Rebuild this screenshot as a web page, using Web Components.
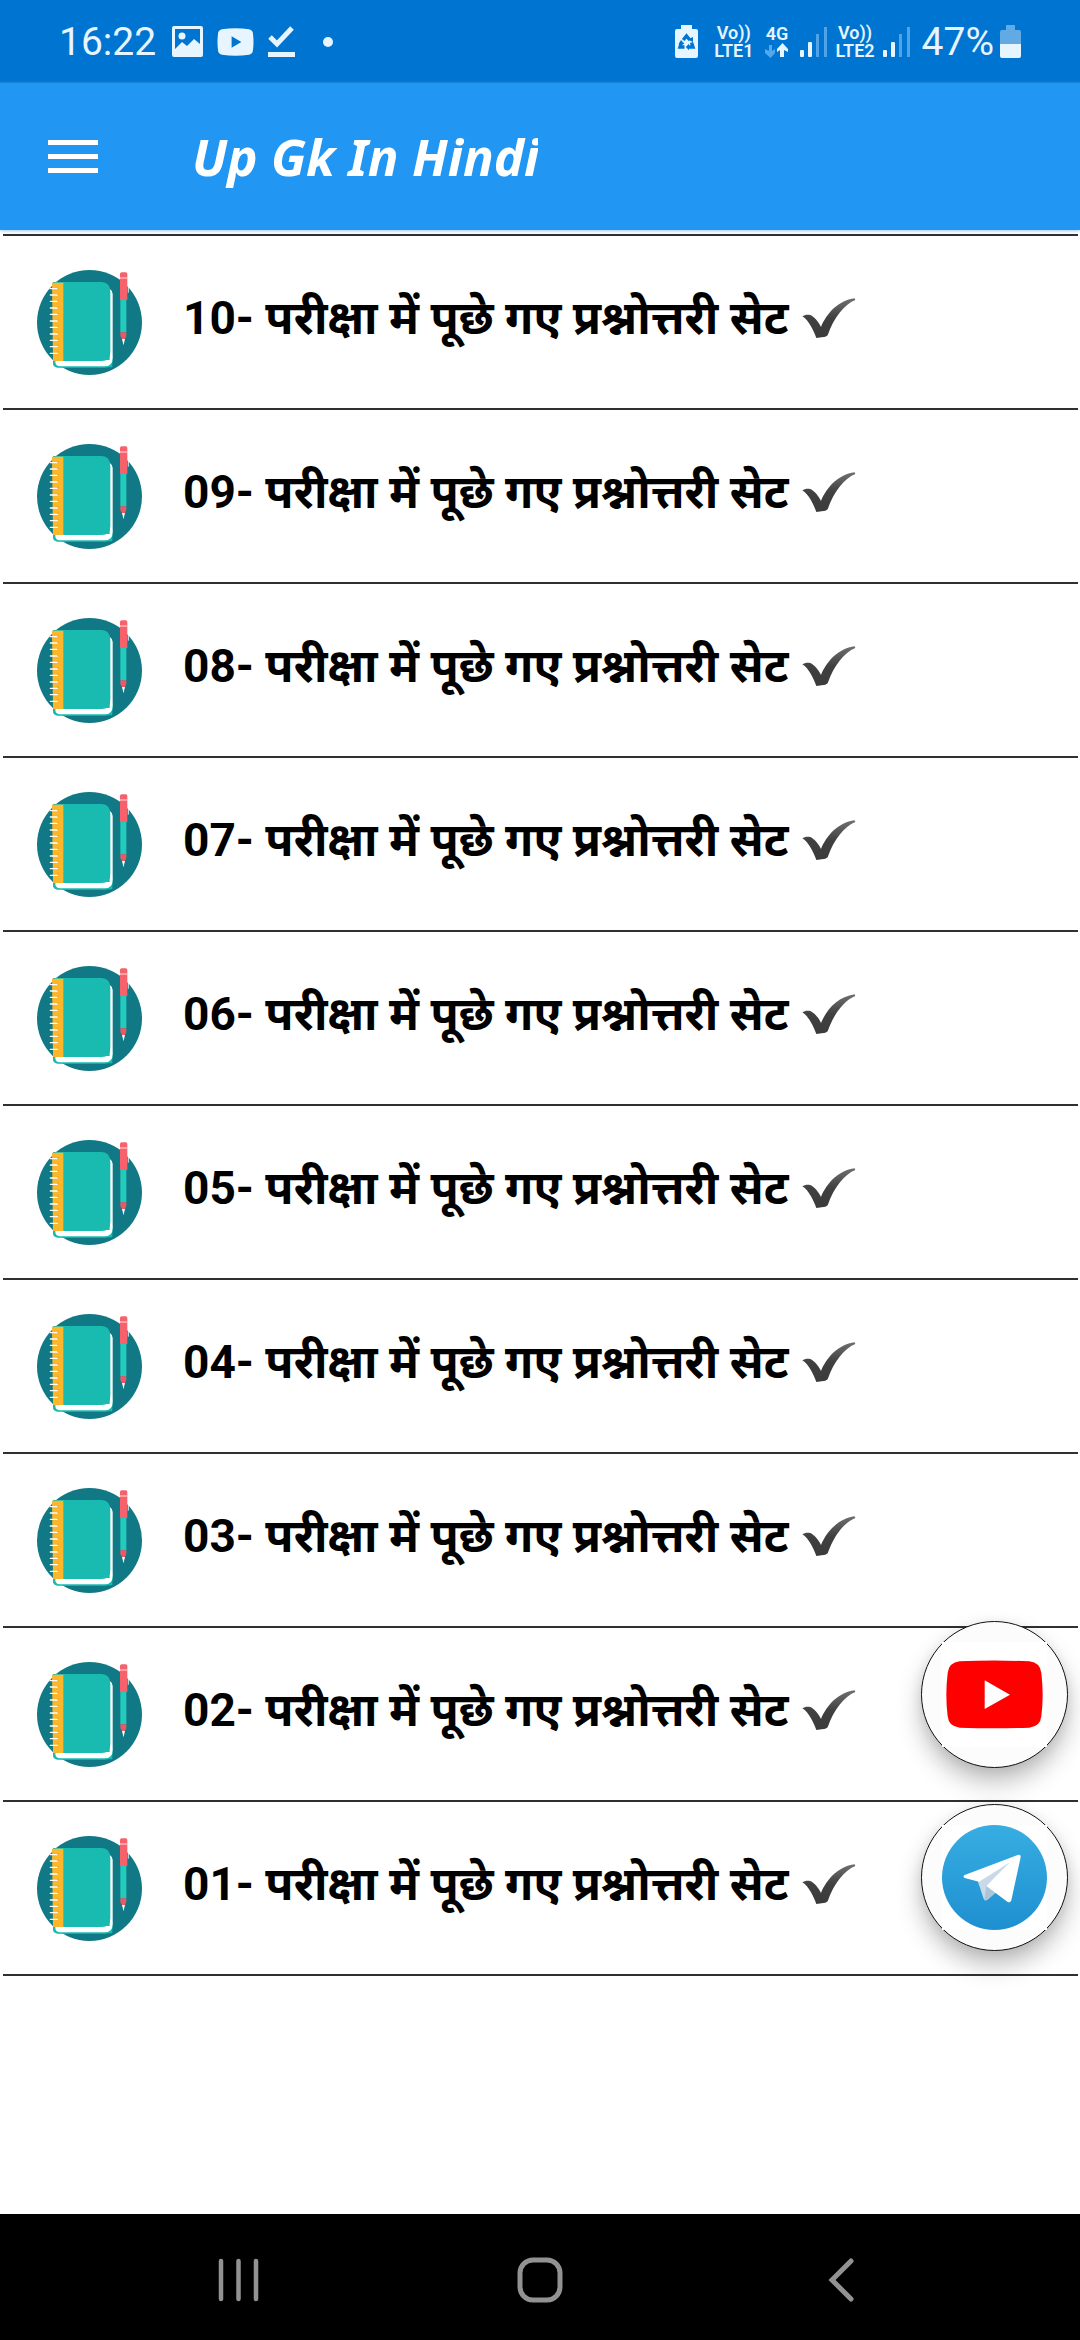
<!DOCTYPE html>
<html lang="hi">
<head>
<meta charset="utf-8">
<meta name="viewport" content="width=device-width, initial-scale=1">
<title>Up Gk In Hindi</title>
<style>
  body { margin: 0; background: #fff; font-family: Roboto, "Noto Sans", sans-serif; }
</style>
</head>
<body>
<gk-app></gk-app>

<template id="t-status">
  <style>
    :host { display: flex; align-items: center; justify-content: space-between; height: 83px; padding: 0 59px; background: #0074d1; color: #e6f5ff; box-sizing: border-box; }
    .group { display: flex; align-items: center; }
    .left { gap: 14px; }
    .right { gap: 8px; }
    svg { display: block; fill: currentColor; }
    .clock { font-size: 39px; line-height: 40px; }
    .left .clock { margin-right: 2px; }
    .dot { margin-left: 14px; }
    .saver { margin-right: 8px; }
    .stack { display: flex; flex-direction: column; align-items: center; font-size: 18px; line-height: 18px; font-weight: 600; }
    .net { margin: 0 4px; }
    .gapped { margin-right: 4px; }
    .battery { margin-left: -2px; }
  </style>
  <div class="group left">
    <span class="clock">16:22</span>
    <svg width="31" height="31" viewBox="0 0 31 31"><path fill-rule="evenodd" d="M2 0H29Q31 0 31 2V29Q31 31 29 31H2Q0 31 0 29V2Q0 0 2 0ZM3 3V23L10 16L15 20L22 13L28 18V3Z"/><circle cx="10" cy="10" r="3.5"/></svg>
    <svg width="37" height="28" viewBox="0 0 38 28"><path fill-rule="evenodd" d="M5 1Q19-1 33 1Q37 2 37 6Q38 14 37 22Q37 26 33 27Q19 29 5 27Q1 26 1 22Q0 14 1 6Q1 2 5 1ZM15 8V20L25 14Z"/></svg>
    <svg width="27" height="31" viewBox="0 0 27 31"><path d="M0 26H27V31H0Z"/><path d="M2 11L9 18L24 2" fill="none" stroke="currentColor" stroke-width="5"/></svg>
    <svg class="dot" width="10" height="10" viewBox="0 0 10 10"><circle cx="5" cy="5" r="5"/></svg>
  </div>
  <div class="group right">
    <svg class="saver" width="23" height="33" viewBox="0 0 23 33"><path d="M6 0H17V4H21Q23 4 23 6V31Q23 33 21 33H2Q0 33 0 31V6Q0 4 2 4H6Z"/><g fill="none" stroke="#0074d1" stroke-width="3.4"><path d="M8.2 15L11.5 11L14.8 15"/><path d="M16.5 17.5L18 22H13.5"/><path d="M6.5 17.5L5 22H9.5"/></g><path fill="#0074d1" d="M12.5 14.5L18 17V12ZM14 18.7V25.3L10.8 22ZM3.5 19.5L6 15L9.5 19Z"/></svg>
    <span class="stack"><span>Vo))</span><span>LTE1</span></span>
    <span class="stack net"><span>4G</span><svg width="23" height="15" viewBox="0 0 23 15"><path fill="#55a8ea" d="M4 2H7V8L10 6V10L5.500 15L0 10V6L4 8Z"/><path d="M15 14V7L12 9V6L17.500 0L23 6V9L19 7V14Z"/></svg></span>
    <svg width="27" height="31" viewBox="0 0 27 31"><rect y="24" width="4" height="7" rx="1"/><rect x="8" y="16" width="4" height="15" rx="1"/><path fill="#4fa3e6" d="M16 8h3v23h-3zM24 1h3v30h-3z"/></svg>
    <span class="stack"><span>Vo))</span><span>LTE2</span></span>
    <svg class="gapped" width="27" height="31" viewBox="0 0 27 31"><rect y="24" width="4" height="7" rx="1"/><rect x="8" y="16" width="4" height="15" rx="1"/><path fill="#4fa3e6" d="M16 8h3v23h-3zM24 1h3v30h-3z"/></svg>
    <span class="clock">47%</span>
    <svg class="battery" width="21" height="33" viewBox="0 0 21 33"><path fill="#62aae4" d="M6 0H15V5H19Q21 5 21 7V20H0V7Q0 5 2 5H6Z"/><path d="M0 19H21V31Q21 33 19 33H2Q0 33 0 31Z"/></svg>
  </div>
</template>

<template id="t-bar">
  <style>
    :host { display: flex; align-items: center; height: 147px; background: #2196f3; color: #fff; padding-left: 48px; box-sizing: border-box; box-shadow: 0 1px 3px #9ccaf0; }
    button { display: block; padding: 0; border: 0; background: none; color: inherit; margin-right: 94px; }
    svg { display: block; }
    h1 { margin: 0; padding-bottom: 2px; max-width: 346px; overflow: hidden; font: italic 700 51px/72px "Noto Sans", "Open Sans", sans-serif; white-space: nowrap; }
  </style>
  <button type="button" aria-label="Menu"><svg width="50" height="34" viewBox="0 0 50 34" fill="#fff"><path d="M0 0h50v5H0zM0 14h50v5H0zM0 28h50v5H0z"/></svg></button>
  <h1><slot></slot></h1>
</template>

<template id="t-row">
  <style>
    :host { display: block; border-bottom: 2px solid #332f30; }
    a { display: flex; align-items: center; height: 172px; padding-left: 34px; color: #000; text-decoration: none; }
    .book { display: block; flex: none; margin-right: 41px; }
    .label { display: flex; align-items: center; gap: 13px; padding-bottom: 8px; font-size: 46px; line-height: 60px; font-weight: 700; white-space: nowrap; }
  </style>
  <a href="#">
    <svg class="book" width="105" height="105" viewBox="36 42 315 315" overflow="visible">
      <circle cx="193.500" cy="199.500" r="157.500" fill="#107985"/>
      <path d="M84 312H232Q262 312 262 288V334H100Q84 334 84 320Z" fill="#18bbb0"/>
      <path d="M84 312V322Q86 335 100 335H240Q263 335 263 310V300Z" fill="#18bbb0"/>
      <path d="M92 312H254V98Q263 104 263 114V305Q263 331 238 331H104Q90 329 91 316Z" fill="#fff"/>
      <path d="M84 78H230Q256 80 256 108V288Q256 315 230 315H84Z" fill="#19bbb1"/>
      <path d="M81 80H115V315H84Z" fill="#fbb62c"/>
      <path d="M76 98H97M76 117H97M76 136H97M76 156H97M76 175H97M76 195H97M76 214H97M76 234H97M76 253H97M76 272H97M76 292H97" stroke="#fff" stroke-width="4" stroke-linecap="round"/>
      <path d="M98 94V299" stroke="#e7961e" stroke-width="2" stroke-dasharray="5 14"/>
      <path d="M285 54Q285 49 290 49H302Q307 49 307 54V132H285Z" fill="#f7616b"/>
      <path d="M284 66H307M310 86V110" stroke="#fff" stroke-width="2.500"/>
      <path d="M286 132H304V229H286Z" fill="#24cbbd"/>
      <path d="M286 229H304V240L300 249H291L286 240Z" fill="#ec5864"/>
      <path d="M291 249H300L295.500 268Z" fill="#fff"/>
    </svg>
    <span class="label"><slot></slot>
      <svg width="54" height="40" viewBox="64 52 162 120" role="img" aria-label="✔"><defs><linearGradient id="g" x1="0" y1="0" x2="0" y2="1"><stop offset="0" stop-color="#707070"/><stop offset=".5" stop-color="#404040"/><stop offset="1" stop-color="#3b3b3b"/></linearGradient></defs><path fill="url(#g)" d="M65 107C72 102 80 101 89 103C101 109 114 123 121 139C138 98 172 60 222 53L224 58C190 72 160 110 141 164L134 168L107 172C98 148 85 120 65 107Z"/></svg>
    </span>
  </a>
</template>

<template id="t-fab">
  <style>
    :host { display: block; }
    button { display: grid; place-items: center; width: 147px; height: 147px; padding: 0; border: 1px solid #111; border-radius: 50%; background: #fcfcfc; box-shadow: 0 14px 24px rgba(0,0,0,.26), 0 2px 12px rgba(0,0,0,.08); }
    ::slotted(svg) { display: block; background: #fff; }
  </style>
  <button type="button"><slot></slot></button>
</template>

<template id="t-nav">
  <style>
    :host { display: flex; height: 126px; padding: 0 88px; background: #000; box-sizing: border-box; }
    button { flex: 1; display: grid; place-items: center; padding: 6px 0 0; border: 0; background: none; }
    svg { display: block; fill: none; stroke: #929292; }
  </style>
  <button type="button" aria-label="Recents"><svg width="41" height="44" viewBox="0 0 41 44" stroke-width="4.500" stroke-linecap="round"><path d="M3 3V41M20.500 3V41M38 3V41"/></svg></button>
  <button type="button" aria-label="Home"><svg width="46" height="46" viewBox="0 0 46 46" stroke-width="5"><rect x="3" y="3" width="40" height="40" rx="13"/></svg></button>
  <button type="button" aria-label="Back"><svg width="26" height="44" viewBox="0 0 26 44" stroke-width="5" stroke-linecap="round"><path d="M23 3L4 22L23 41"/></svg></button>
</template>

<template id="t-app">
  <style>
    :host { display: flex; flex-direction: column; min-height: 100vh; }
    gk-app-bar { position: relative; }
    main { flex: 1; position: relative; padding: 4px 2px 0 3px; }
    .list { border-top: 2px solid #332f30; }
    .fabs { position: absolute; right: 12px; bottom: 263px; display: flex; flex-direction: column; gap: 36px; }
  </style>
  <gk-status-bar></gk-status-bar>
  <gk-app-bar>Up Gk In Hindi</gk-app-bar>
  <main>
    <div class="list" role="list">
      <gk-row role="listitem">10- परीक्षा में पूछे गए प्रश्नोत्तरी सेट</gk-row>
      <gk-row role="listitem">09- परीक्षा में पूछे गए प्रश्नोत्तरी सेट</gk-row>
      <gk-row role="listitem">08- परीक्षा में पूछे गए प्रश्नोत्तरी सेट</gk-row>
      <gk-row role="listitem">07- परीक्षा में पूछे गए प्रश्नोत्तरी सेट</gk-row>
      <gk-row role="listitem">06- परीक्षा में पूछे गए प्रश्नोत्तरी सेट</gk-row>
      <gk-row role="listitem">05- परीक्षा में पूछे गए प्रश्नोत्तरी सेट</gk-row>
      <gk-row role="listitem">04- परीक्षा में पूछे गए प्रश्नोत्तरी सेट</gk-row>
      <gk-row role="listitem">03- परीक्षा में पूछे गए प्रश्नोत्तरी सेट</gk-row>
      <gk-row role="listitem">02- परीक्षा में पूछे गए प्रश्नोत्तरी सेट</gk-row>
      <gk-row role="listitem">01- परीक्षा में पूछे गए प्रश्नोत्तरी सेट</gk-row>
    </div>
    <div class="fabs">
      <gk-fab><svg width="105" height="105" viewBox="183 155 315 315" role="img" aria-label="YouTube"><path fill="#f00" d="M236 213Q340 208 445 213Q478 217 481 248Q489 313 481 378Q478 409 445 412Q340 416 236 412Q203 409 200 378Q192 313 200 248Q203 217 236 213Z"/><path fill="#fff" d="M311 270L387 313L311 356Z"/></svg></gk-fab>
      <gk-fab><svg width="105" height="105" viewBox="183 705 315 315" role="img" aria-label="Telegram"><defs><linearGradient id="tg" x1="0" y1="0" x2="0" y2="1"><stop offset="0" stop-color="#37aee2"/><stop offset="1" stop-color="#1e8fd0"/></linearGradient></defs><circle cx="340.500" cy="862.500" r="157.500" fill="url(#tg)"/><path fill="#c8daea" d="M290 872L308 926Q311 934 319 929L346 906L385 818Z"/><path fill="#a9c6d8" d="M316 885L310 930Q314 933 319 929L346 906Z"/><path fill="#fff" d="M251 855L410 795Q420 792 419 802L391 931Q388 940 379 935L316 888L385 818L294 875L251 864Q244 859 251 855Z"/></svg></gk-fab>
    </div>
  </main>
  <gk-nav-bar></gk-nav-bar>
</template>

<script>
  const define = (name, templateId) => customElements.define(name, class extends HTMLElement {
    constructor() {
      super();
      this.attachShadow({ mode: 'open' })
        .append(document.getElementById(templateId).content.cloneNode(true));
    }
  });
  define('gk-status-bar', 't-status');
  define('gk-app-bar', 't-bar');
  define('gk-row', 't-row');
  define('gk-fab', 't-fab');
  define('gk-nav-bar', 't-nav');
  define('gk-app', 't-app');
</script>
</body>
</html>
